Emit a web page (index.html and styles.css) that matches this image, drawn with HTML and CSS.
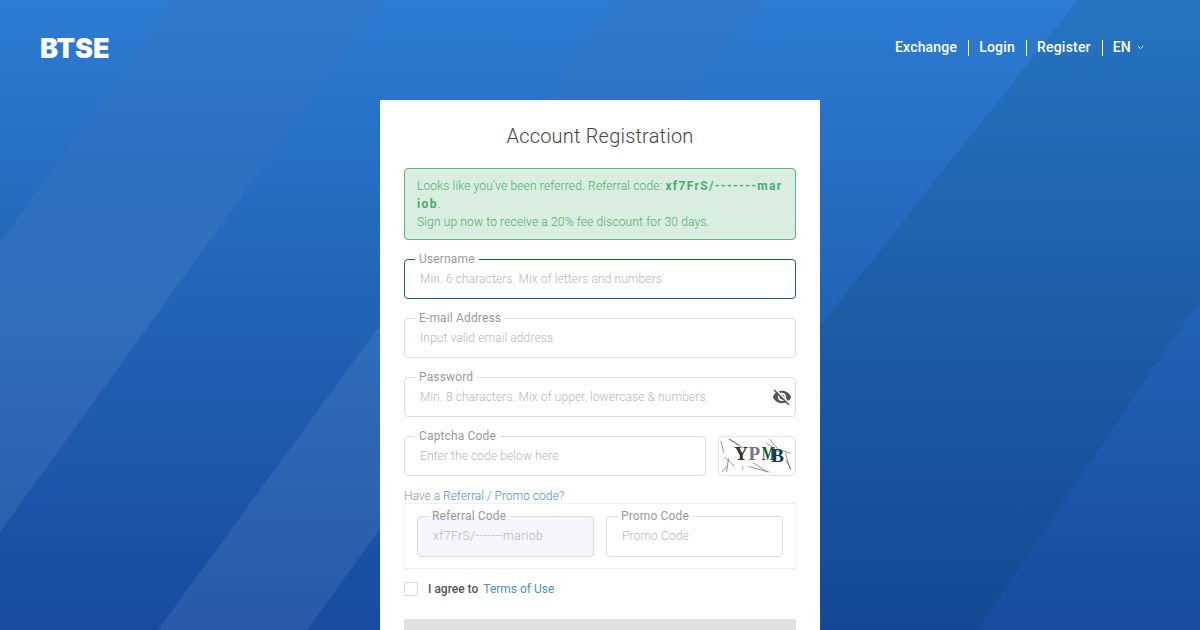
FILE: index.html
```html
<!DOCTYPE html>
<html lang="en">
<head>
    <meta charset="UTF-8">
    <meta name="viewport" content="width=device-width, initial-scale=1.0">
    <title>Account Registration</title>
    <link rel="stylesheet" href="styles.css">
</head>
<body>
    <div class="page">
        <svg class="bands" viewBox="0 0 1200 630" aria-hidden="true">
            <defs>
                <linearGradient id="bandFill" gradientUnits="userSpaceOnUse" x1="0" y1="0" x2="0" y2="630">
                    <stop offset="0" stop-color="#6e5a82" stop-opacity="0.08"/>
                    <stop offset="0.25" stop-color="#6e7aa0" stop-opacity="0.08"/>
                    <stop offset="0.5" stop-color="#ffffff" stop-opacity="0.07"/>
                    <stop offset="1" stop-color="#ffffff" stop-opacity="0.08"/>
                </linearGradient>
            </defs>
            <polygon points="175,0 383,0 0,532 0,243" fill="url(#bandFill)"/>
            <polygon points="617,0 762,0 307,630 158,630" fill="url(#bandFill)"/>
            <polygon points="1078,0 1200,0 1200,300 977,630 580,630" fill="#003c3c" fill-opacity="0.12"/>
        </svg>

        <header class="topbar">
            <a class="logo" href="#">BTSE</a>
            <nav class="nav">
                <a href="#">Exchange</a>
                <a href="#">Login</a>
                <a href="#">Register</a>
                <a class="lang" href="#">EN
                    <svg width="7" height="5" viewBox="0 0 7 5"><path d="M0.8 1l2.7 2.6L6.2 1" fill="none" stroke="#fff" stroke-width="0.9"/></svg>
                </a>
            </nav>
        </header>

        <main class="card">
            <h1>Account Registration</h1>

            <div class="alert">
                Looks like you've been referred. Referral code: <strong>xf7FrS/-------mariob</strong>.<br>
                Sign up now to receive a 20% fee discount for 30 days.
            </div>

            <fieldset class="field active">
                <legend>Username</legend>
                <input type="text" placeholder="Min. 6 characters. Mix of letters and numbers">
            </fieldset>

            <fieldset class="field">
                <legend>E-mail Address</legend>
                <input type="text" placeholder="Input valid email address">
            </fieldset>

            <fieldset class="field with-icon">
                <legend>Password</legend>
                <input type="password" placeholder="Min. 8 characters. Mix of upper, lowercase &amp; numbers">
                <svg class="eye" width="20" height="20" viewBox="0 0 24 24"><path fill="#555" d="M12 7c2.76 0 5 2.24 5 5 0 .65-.13 1.26-.36 1.83l2.92 2.92c1.51-1.26 2.7-2.89 3.43-4.75-1.73-4.39-6-7.5-11-7.5-1.4 0-2.74.25-3.98.7l2.16 2.16C10.74 7.13 11.35 7 12 7zM2 4.27l2.28 2.28.46.46C3.08 8.3 1.78 10.02 1 12c1.73 4.39 6 7.5 11 7.5 1.55 0 3.03-.3 4.38-.84l.42.42L19.73 22 21 20.73 3.27 3 2 4.27zM7.53 9.8l1.55 1.55c-.05.21-.08.43-.08.65 0 1.66 1.34 3 3 3 .22 0 .44-.03.65-.08l1.55 1.55c-.67.33-1.41.53-2.2.53-2.76 0-5-2.24-5-5 0-.79.2-1.53.53-2.2zm4.31-.78l3.15 3.15.02-.16c0-1.66-1.34-3-3-3l-.17.01z"/></svg>
            </fieldset>

            <div class="captcha-row">
                <fieldset class="field">
                    <legend>Captcha Code</legend>
                    <input type="text" placeholder="Enter the code below here">
                </fieldset>
                <svg class="captcha" width="78" height="40" viewBox="0 0 78 40">
                    <g fill="none" stroke="#444" stroke-width="0.6">
                        <path d="M1 4l3 13M9 2l11 7M10 2l14 9M5 21l10 10M2 37l5-6M9 22l-2 15M24 31v3"/>
                        <path d="M35 27l15 10M30 31l22 6M49 6l13 10M52 2l10 12M64 14l10 3M69 17l5 17M69 24l6 10"/>
                    </g>
                    <text class="captcha-char" x="15" y="24" fill="#3a2a2a">Y</text>
                    <text class="captcha-char" x="30" y="24" fill="#77738c">P</text>
                    <text class="captcha-char" x="44" y="24" fill="#0f5a35" textLength="14" lengthAdjust="spacingAndGlyphs">M</text>
                    <text class="captcha-char" x="54" y="26" fill="#13374f">B</text>
                </svg>
            </div>

            <p class="promo-toggle">Have a <a href="#">Referral / Promo code</a>?</p>

            <div class="promo-box">
                <fieldset class="field disabled">
                    <legend>Referral Code</legend>
                    <input type="text" placeholder="xf7FrS/-------mariob" disabled>
                </fieldset>
                <fieldset class="field">
                    <legend>Promo Code</legend>
                    <input type="text" placeholder="Promo Code">
                </fieldset>
            </div>

            <label class="agree">
                <span class="checkbox"></span>
                <span class="agree-text">I agree to</span>
                <a href="#">Terms of Use</a>
            </label>

            <button class="submit" disabled>Register</button>
        </main>
    </div>
</body>
</html>
```

FILE: styles.css
```css
* {
    box-sizing: border-box;
}

body {
    margin: 0;
    font-family: Roboto, 'Liberation Sans', sans-serif;
    color: #444;
}

a {
    text-decoration: none;
}

.page {
    position: relative;
    height: 100vh;
    overflow: hidden;
    background: linear-gradient(180deg, #2c7cd3 0%, #2164b7 48%, #184b9f 100%);
}

.bands {
    position: absolute;
    top: 0;
    left: 0;
    width: 100%;
    height: 100%;
}

.topbar {
    position: relative;
    height: 100px;
    display: flex;
    justify-content: space-between;
    align-items: center;
    padding: 0 56px 5px 40px;
}

.logo {
    margin-top: 2px;
    font-family: Inter, sans-serif;
    font-size: 27px;
    font-weight: 900;
    color: #fff;
}

.nav {
    display: flex;
    align-items: center;
}

.nav a {
    color: #fff;
    font-size: 14px;
    font-weight: 500;
    letter-spacing: 0.2px;
    line-height: 15px;
    padding: 0 11px 1px 10px;
    border-right: 1px solid #fff;
}

.nav .lang {
    display: flex;
    align-items: center;
    gap: 6px;
    padding-right: 0;
    border-right: none;
}

.card {
    position: relative;
    width: 440px;
    margin: 0 auto;
    padding: 24px;
    background: #fff;
}

h1 {
    margin: 0 0 20px;
    font-size: 20px;
    font-weight: 300;
    line-height: 24px;
    letter-spacing: 0.2px;
    text-align: center;
}

.alert {
    height: 72px;
    margin-bottom: 13px;
    padding: 8px 12px;
    background: #d9eee0;
    border: 1px solid #5fb57f;
    border-radius: 4px;
    color: #49ad6e;
    font-size: 12px;
    line-height: 18px;
    font-weight: 300;
    letter-spacing: 0.15px;
}

.alert strong {
    font-weight: 700;
    letter-spacing: 1.35px;
    word-break: break-all;
}

.field {
    position: relative;
    min-width: 0;
    margin: 0 0 13px;
    padding: 0;
    border: 1px solid #dcdcdc;
    border-radius: 4px;
}

.field legend {
    margin-left: 10px;
    padding: 0 4px;
    color: #999;
    font-size: 12px;
    line-height: 12px;
    letter-spacing: 0.15px;
}

.field input {
    display: block;
    width: 100%;
    height: 33px;
    padding: 0 15px 5px;
    border: none;
    outline: none;
    background: transparent;
    font-family: inherit;
    font-size: 12px;
    font-weight: 300;
    letter-spacing: 0.1px;
}

.field input::placeholder {
    color: #b4b7bb;
    opacity: 1;
}

.field.active {
    border-color: #1a56a8;
}

.field.disabled {
    background: #f4f6f9;
}

.field.disabled input {
    letter-spacing: 0.5px;
}

.eye {
    position: absolute;
    right: 3px;
    top: 4px;
}

.captcha-row {
    display: flex;
    align-items: flex-end;
    gap: 12px;
    margin-bottom: 13px;
}

.captcha-row .field {
    flex: 1;
    margin-bottom: 0;
}

.captcha {
    flex: none;
    border: 1px solid #e4e4e4;
    border-radius: 4px;
}

.captcha-char {
    font-family: 'Liberation Serif', serif;
    font-size: 20px;
    font-weight: 700;
}

.promo-toggle {
    margin: 0;
    color: #7f93a8;
    font-size: 12px;
    font-weight: 300;
    line-height: 14px;
}

.promo-toggle a,
.agree a {
    color: #4a90cf;
}

.promo-box {
    display: flex;
    gap: 12px;
    height: 66px;
    padding: 6px 12px 0;
    border: 1px solid #f1f1f1;
}

.promo-box .field {
    flex: 1;
    height: 47px;
    margin: 0;
}

.agree {
    display: flex;
    align-items: center;
    height: 14px;
    margin: 13px 0 23px;
    font-size: 12px;
}

.agree-text {
    font-weight: 500;
    color: #555;
}

.checkbox {
    width: 14px;
    height: 14px;
    margin-right: 10px;
    border: 1px solid #d8d8d8;
    border-radius: 2px;
}

.agree a {
    margin-left: 5px;
}

.submit {
    display: block;
    width: 100%;
    height: 52px;
    border: none;
    border-radius: 2px;
    background: #e0e0e0;
    color: #fff;
    font-family: inherit;
    font-size: 14px;
}
```
